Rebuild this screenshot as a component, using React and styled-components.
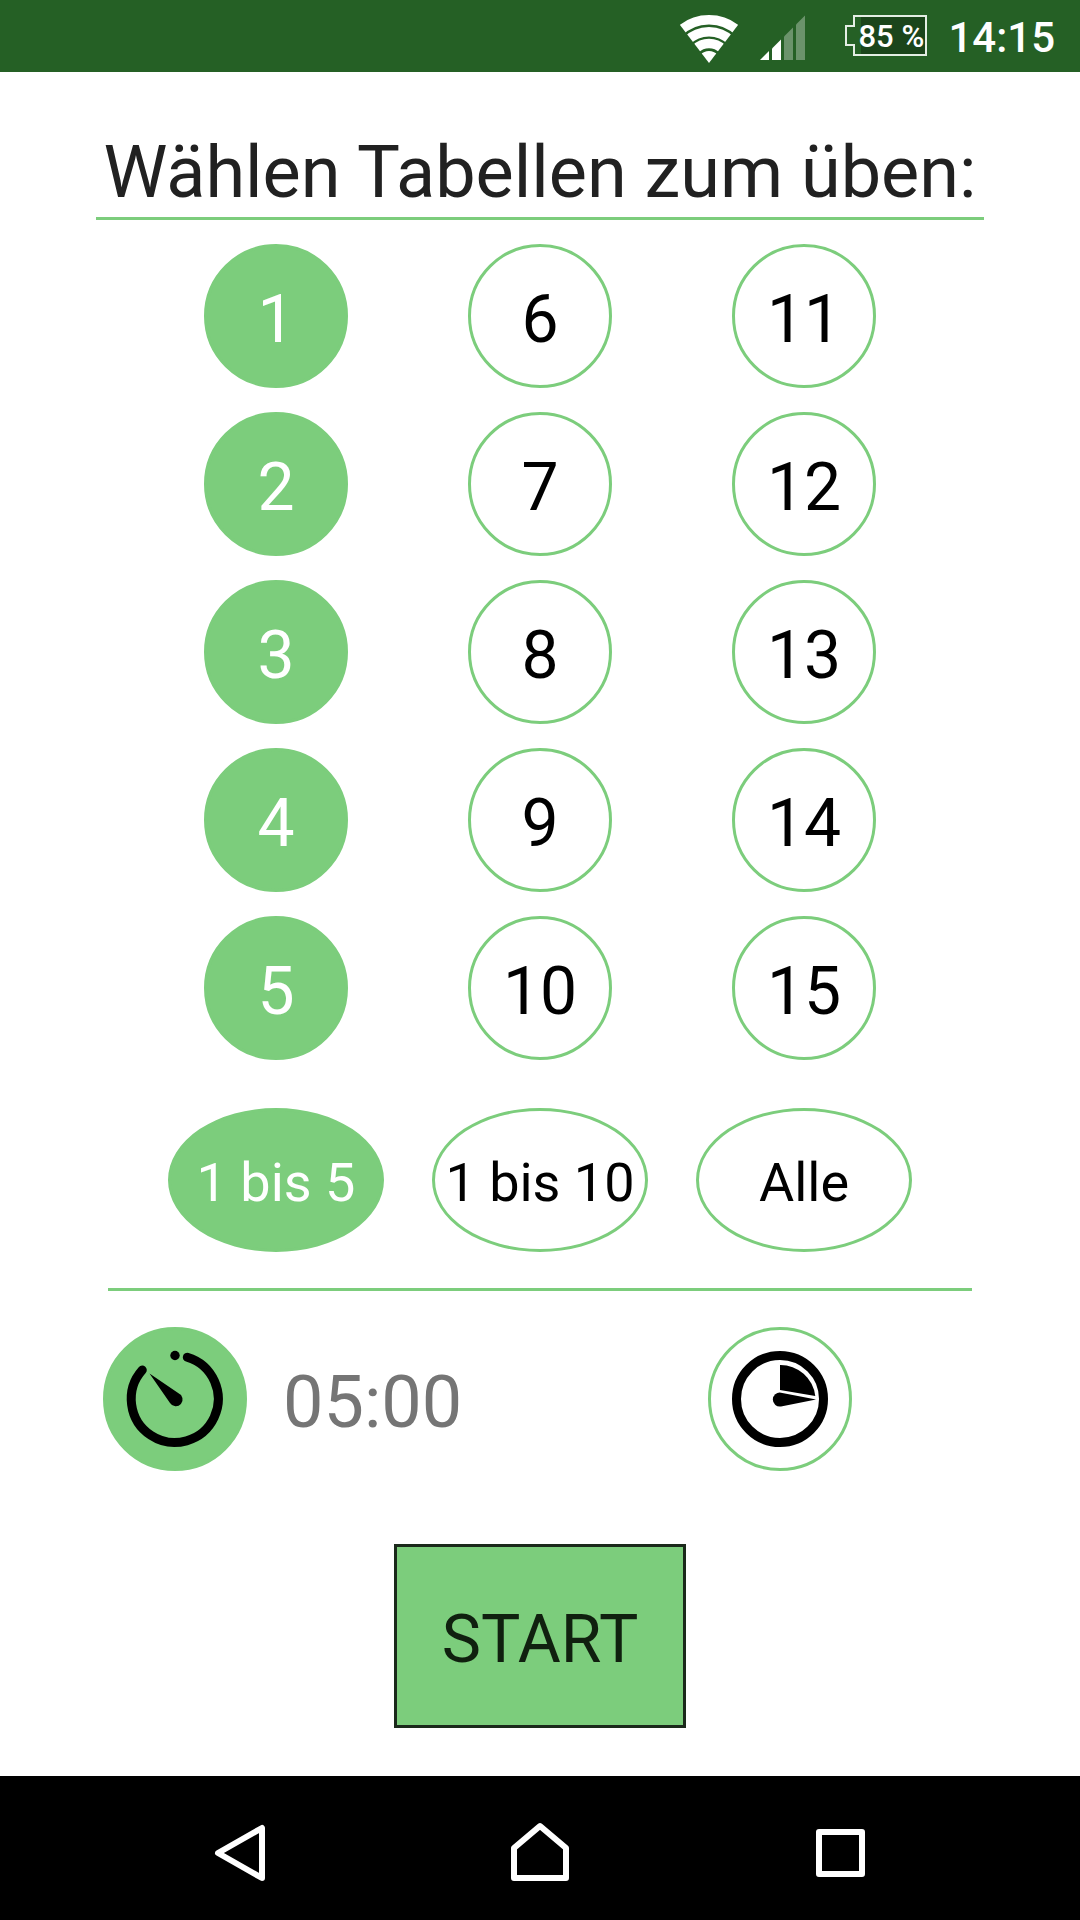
// Packages
import React, { useState } from "react";
import styled, { createGlobalStyle } from "styled-components";

// Styles
const GlobalStyle = createGlobalStyle`
    * {
        box-sizing: border-box;
    }
    body {
        margin: 0;
        background: #fff;
        font-family: Roboto, "Liberation Sans", sans-serif;
    }
`
const Screen = styled.div`
    display: flex;
    flex-direction: column;
    min-height: 100vh;
`
const StatusBar = styled.header`
    display: flex;
    align-items: flex-start;
    justify-content: flex-end;
    height: 72px;
    padding: 15px 25px 0 0;
    background: #256025;
    color: #fff;
`
const WifiIcon = styled.svg`
    width: 58px;
    height: 48px;
    margin-right: 22px;
`
const SignalIcon = styled.svg`
    width: 45px;
    height: 45px;
    margin-right: 40px;
`
const Battery = styled.div`
    position: relative;
    width: 82px;
    height: 41px;
    padding-left: 13px;
    margin-right: 21px;
    font-size: 31px;
    font-weight: 500;
    line-height: 43px;
    white-space: nowrap;
`
const BatteryShape = styled.svg`
    position: absolute;
    top: 0;
    left: 0;
    width: 82px;
    height: 41px;
`
const BatteryLevel = styled.span`
    position: relative;
`
const Clock = styled.time`
    font-size: 42px;
    font-weight: 500;
    line-height: 46px;
`
const Content = styled.main`
    display: flex;
    flex: 1;
    flex-direction: column;
    align-items: center;
    padding: 59px 0 48px;
`
const Title = styled.h1`
    margin: 0 0 24px;
    padding: 0 8px 2px;
    border-bottom: 3px solid #7ccd7c;
    color: #212121;
    font-size: 72px;
    font-weight: 400;
    line-height: 84px;
    text-align: center;
`
const NumberGrid = styled.section`
    display: grid;
    grid-template-columns: repeat(3, 1fr);
    grid-template-rows: repeat(5, auto);
    grid-auto-flow: column;
    justify-items: center;
    row-gap: 24px;
    width: 100%;
    padding: 0 144px;
`
const RangeGrid = styled.section`
    display: grid;
    grid-template-columns: repeat(3, 1fr);
    justify-items: center;
    width: 100%;
    margin-top: 48px;
    padding: 0 144px;
`
const RoundButton = styled.button`
    width: ${props => props.$wide ? "216px" : "144px"};
    height: 144px;
    padding: ${props => props.$wide ? "4px 0 0" : "6px 0 0"};
    border: 3px solid #7ccd7c;
    border-radius: 50%;
    background: ${props => props.$active ? "#7ccd7c" : "#fff"};
    color: ${props => props.$active ? "#fff" : "#000"};
    font-family: inherit;
    font-size: ${props => props.$wide ? "54px" : "66px"};
    white-space: nowrap;
    cursor: pointer;
`
const IconButton = styled(RoundButton)`
    padding: 0;
    & svg {
        display: block;
        width: 138px;
        height: 138px;
    }
`
const Divider = styled.hr`
    width: 80%;
    height: 3px;
    margin: 36px 0;
    border: none;
    background: #7ccd7c;
`
const TimerRow = styled.section`
    display: flex;
    align-items: center;
    justify-content: space-between;
    width: 100%;
    padding: 0 228px 0 103px;
`
const TimerGroup = styled.div`
    display: flex;
    align-items: center;
    gap: 36px;
`
const TimeLeft = styled.span`
    padding-top: 8px;
    color: #757575;
    font-size: 72px;
    line-height: 84px;
`
const StartButton = styled.button`
    margin-top: 73px;
    width: 292px;
    height: 184px;
    padding: 6px 0 0;
    border: 3px solid #1b291b;
    background: #7ccd7c;
    color: #10200f;
    font-family: inherit;
    font-size: 66px;
    cursor: pointer;
`
const NavBar = styled.nav`
    display: grid;
    grid-template-columns: repeat(3, 1fr);
    height: 144px;
    padding: 0 90px;
    background: #000;
`
const NavButton = styled.button`
    display: flex;
    align-items: center;
    justify-content: center;
    padding: 8px 0 0;
    border: none;
    background: transparent;
    cursor: pointer;
    & svg {
        width: 60px;
        height: 60px;
        fill: none;
        stroke: #fff;
        stroke-width: 6;
        stroke-linejoin: round;
    }
`

// Constants
const NUMBERS = [1, 2, 3, 4, 5, 6, 7, 8, 9, 10, 11, 12, 13, 14, 15];
const RANGES = [
    { label: "1 bis 5", max: 5 },
    { label: "1 bis 10", max: 10 },
    { label: "Alle", max: 15 }
];

const Status = () => (
    <StatusBar>
        <WifiIcon viewBox="0 0 58 48" aria-hidden="true">
            <clipPath id="fan">
                <path d="M29 48 L0 10 V0 H58 V10 Z" />
            </clipPath>
            <g clipPath="url(#fan)" fill="none" stroke="#fff">
                <circle cx="29" cy="48" r="43.3" strokeWidth="9.4" />
                <circle cx="29" cy="48" r="31.3" strokeWidth="9.4" />
                <circle cx="29" cy="48" r="19.5" strokeWidth="9.4" />
                <circle cx="29" cy="48" r="6" strokeWidth="12" />
            </g>
        </WifiIcon>
        <SignalIcon viewBox="0 0 45 45" fill="#fff" aria-hidden="true">
            <path d="M0 45 L9 36 V45 Z" />
            <path d="M12 33.500 L21 24.500 V45 H12 Z" />
            <path d="M24 21.500 L33 12.500 V45 H24 Z" opacity=".32" />
            <path d="M36 9.500 L45 .5 V45 H36 Z" opacity=".32" />
        </SignalIcon>
        <Battery>
            <BatteryShape viewBox="0 0 82 41" aria-hidden="true">
                <path d="M9 1 H81 V40 H9 V30 H1 V11 H9 Z" fill="#1b451b" stroke="#e4eee4" strokeWidth="2" />
                <path d="M2 12 H10 V2 H16 V39 H10 V29 H2 Z" fill="#256025" />
            </BatteryShape>
            <BatteryLevel>85 %</BatteryLevel>
        </Battery>
        <Clock>14:15</Clock>
    </StatusBar>
);

const TimerIcon = () => (
    <svg viewBox="3 3 138 138" aria-hidden="true">
        <path d="M84.300 30.300 A43.500 43.500 0 1 1 39.300 43" fill="none" stroke="#000" strokeWidth="9" strokeLinecap="round" />
        <circle cx="72" cy="28.500" r="4.700" />
        <path d="M46.500 46.500 L75.500 66.200 A6.800 6.800 0 1 1 67 76 Z" />
    </svg>
);

const PieIcon = () => (
    <svg viewBox="3 3 138 138" aria-hidden="true">
        <circle cx="72" cy="72" r="43.500" fill="none" stroke="#000" strokeWidth="9" />
        <path d="M72 38 A35 35 0 0 1 107.300 69 L72 63 Z" />
        <path d="M108 72.500 L73 65.700 A7 7 0 1 0 73 79.500 Z" />
    </svg>
);

const App = () => {
    const [max, setMax] = useState(5);
    const [selected, setSelected] = useState([1, 2, 3, 4, 5]);
    const [mode, setMode] = useState("timer");

    const toggleNumber = (number) => {
        setMax(null);
        setSelected(selected.includes(number)
            ? selected.filter(value => value !== number)
            : [...selected, number]);
    }

    const selectRange = (value) => {
        setMax(value);
        setSelected(NUMBERS.filter(number => number <= value));
    }

    return (
        <Screen>
            <GlobalStyle />
            <Status />
            <Content>
                <Title>Wählen Tabellen zum üben:</Title>
                <NumberGrid>
                    {NUMBERS.map(number => (
                        <RoundButton
                            key={number}
                            type="button"
                            $active={selected.includes(number)}
                            aria-pressed={selected.includes(number)}
                            onClick={() => toggleNumber(number)}
                        >
                            {number}
                        </RoundButton>
                    ))}
                </NumberGrid>
                <RangeGrid>
                    {RANGES.map(range => (
                        <RoundButton
                            key={range.max}
                            type="button"
                            $wide
                            $active={max === range.max}
                            aria-pressed={max === range.max}
                            onClick={() => selectRange(range.max)}
                        >
                            {range.label}
                        </RoundButton>
                    ))}
                </RangeGrid>
                <Divider />
                <TimerRow>
                    <TimerGroup>
                        <IconButton type="button" aria-label="Timer" $active={mode === "timer"} onClick={() => setMode("timer")}>
                            <TimerIcon />
                        </IconButton>
                        <TimeLeft>05:00</TimeLeft>
                    </TimerGroup>
                    <IconButton type="button" aria-label="Stoppuhr" $active={mode === "clock"} onClick={() => setMode("clock")}>
                        <PieIcon />
                    </IconButton>
                </TimerRow>
                <StartButton type="button">START</StartButton>
            </Content>
            <NavBar>
                <NavButton type="button" aria-label="Zurück">
                    <svg viewBox="0 0 60 60"><path d="M8 31 L52 6 V56 Z" /></svg>
                </NavButton>
                <NavButton type="button" aria-label="Start">
                    <svg viewBox="0 0 60 60"><path d="M4 56 V26 L30 4 L56 26 V56 Z" /></svg>
                </NavButton>
                <NavButton type="button" aria-label="Übersicht">
                    <svg viewBox="0 0 60 60"><rect x="9" y="10" width="43" height="42" /></svg>
                </NavButton>
            </NavBar>
        </Screen>
    );
}

export default App;
